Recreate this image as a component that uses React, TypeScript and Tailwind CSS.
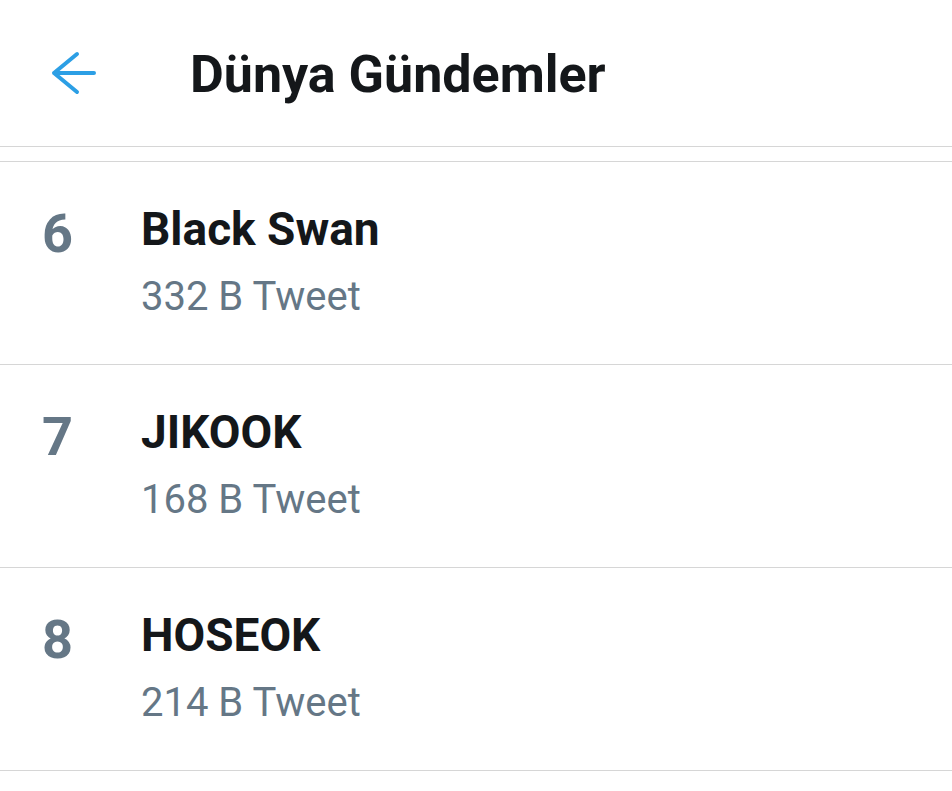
import type React from "react";

interface Trend {
  rank: number;
  name: string;
  count: string;
}

const trends: Trend[] = [
  { rank: 6, name: "Black Swan", count: "332 B Tweet" },
  { rank: 7, name: "JIKOOK", count: "168 B Tweet" },
  { rank: 8, name: "HOSEOK", count: "214 B Tweet" },
];

const BackArrow: React.FC = () => (
  <svg width="46" height="44" viewBox="0 0 46 44" fill="none">
    <path
      d="M3 22h40M26 3L3 22l23 19"
      stroke="#2c9fe5"
      strokeWidth="4"
      strokeLinecap="round"
      strokeLinejoin="round"
    />
  </svg>
);

const App: React.FC = () => {
  return (
    <div
      className="w-[952px] h-[791px] bg-white overflow-hidden"
      style={{ fontFamily: "Roboto, 'Liberation Sans', sans-serif" }}
    >
      {/* Header */}
      <div className="h-[147px] flex items-center border-b border-[#d6d6d6]">
        <div className="w-[190px] pl-[51px] flex items-center">
          <BackArrow />
        </div>
        <h1 className="pt-[3px] text-[52px] font-bold text-[#14171a] leading-none">
          Dünya Gündemler
        </h1>
      </div>

      <div className="h-[14px]" />

      {/* Trend list */}
      <div className="border-t border-[#d6d6d6]">
        {trends.map((trend) => (
          <div
            key={trend.rank}
            className="h-[203px] flex border-b border-[#d6d6d6]"
          >
            <div className="w-[141px] pl-[42px] pt-[45px] text-[54px] font-bold text-[#657786] leading-none">
              {trend.rank}
            </div>
            <div className="pt-[44px]">
              <div className="text-[46px] font-bold text-[#14171a] leading-none">
                {trend.name}
              </div>
              <div className="mt-[25px] text-[40px] text-[#657786] leading-none">
                {trend.count}
              </div>
            </div>
          </div>
        ))}
      </div>
    </div>
  );
};

export default App;
